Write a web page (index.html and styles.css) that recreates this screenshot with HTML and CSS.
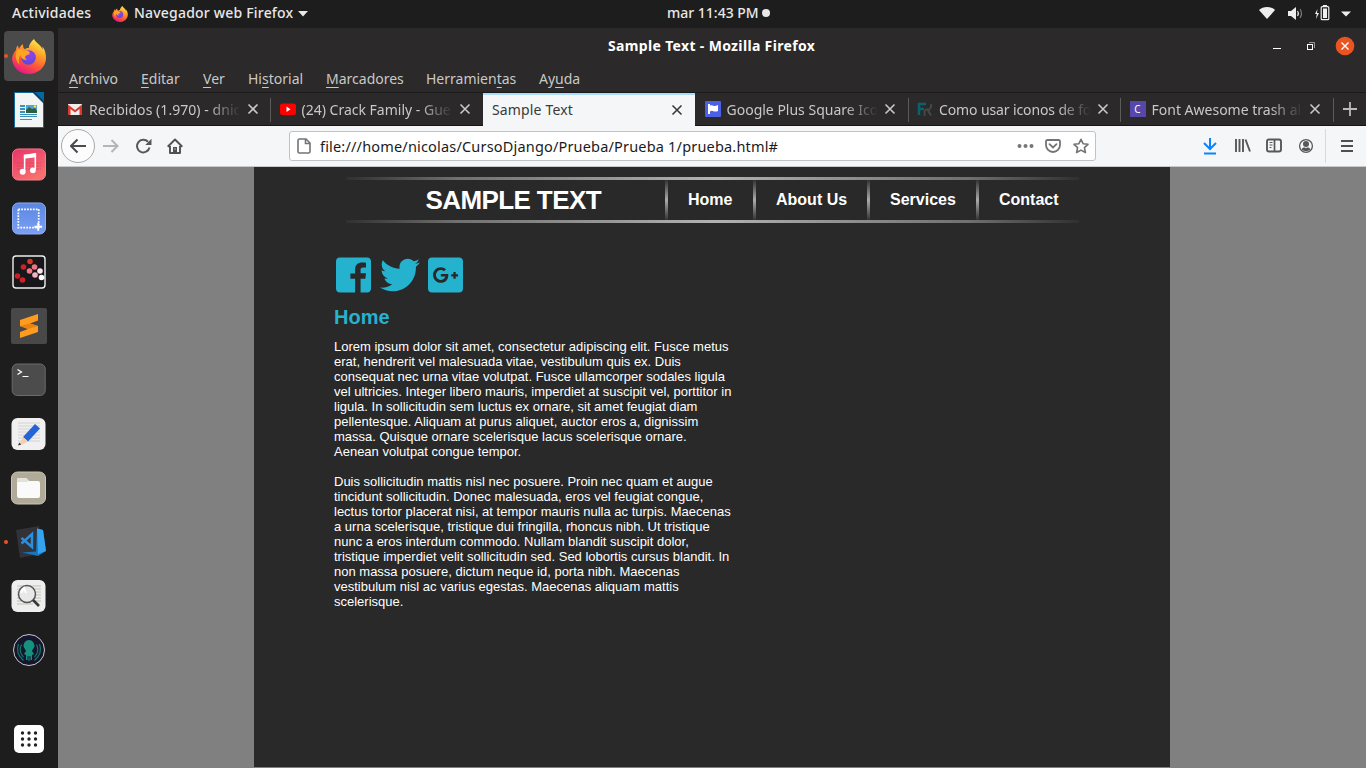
FILE: index.html
```html
<!DOCTYPE html>
<html lang="es">
<head>
<meta charset="utf-8">
<title>Sample Text</title>
<link rel="stylesheet" href="styles.css">
</head>
<body>
<svg width="0" height="0" class="defs">
  <defs>
    <linearGradient id="fx" x1="0.8" y1="0" x2="0.3" y2="1"><stop offset="0" stop-color="#fff44f"/><stop offset=".35" stop-color="#ffa32a"/><stop offset=".65" stop-color="#ff5a36"/><stop offset="1" stop-color="#e8138c"/></linearGradient>
    <radialGradient id="fxg" cx=".55" cy=".3" r=".8"><stop offset="0" stop-color="#a03cf0"/><stop offset="1" stop-color="#4a4fd0"/></radialGradient>
    <linearGradient id="music" x1="0" y1="0" x2=".6" y2="1"><stop offset="0" stop-color="#e8336a"/><stop offset="1" stop-color="#f8706e"/></linearGradient>
    <linearGradient id="shot" x1="0" y1="0" x2="0" y2="1"><stop offset="0" stop-color="#5b86e0"/><stop offset="1" stop-color="#7ba0f5"/></linearGradient>
    <symbol id="firefox" viewBox="0 0 34 35">
      <path fill="url(#fx)" d="M22 0c-3 3-5 5-5.200 9-2 0-3 .5-4 1.200-1.500-1-2-3-1.700-5-2 1-3.300 2.600-4 4.500L5.800 6.600C4.600 7.800 4 9.500 4 11 1.500 14 0 17 0 20.500 1 29 8 35 17 35s17-7 17-16c0-4-1-8.500-3.500-11.500l.2 3.200C29 5.500 24 4.500 22 0z"/>
      <circle cx="16.500" cy="18.500" r="7.300" fill="url(#fxg)"/>
      <path fill="#ffa51f" d="M5 11c3-1.500 6-.8 8 .7 2-.5 4 .3 5 2.300-1 2-4 2-4.800 3.500-.5 1.500.8 2.500 1.800 3-3 1-6-1-6.500-4.500C7 18 6 22 8 26 3 22 3 15 5 11z"/>
    </symbol>
    <symbol id="close" viewBox="0 0 12 12"><path d="M1.500 1.500l9 9m0-9l-9 9" fill="none" stroke="currentColor" stroke-width="1.600"/></symbol>
  </defs>
</svg>

<header class="topbar">
  <span class="activities">Actividades</span>
  <svg class="top-fx" width="16" height="16"><use href="#firefox"/></svg>
  <span class="appname">Navegador web Firefox</span>
  <svg class="top-caret" width="10" height="6"><path d="M0 0h10L5 5.500z" fill="#e8e8e8"/></svg>
  <span class="clock">mar 11:43 PM</span>
  <i class="clock-dot"></i>
  <div class="tray">
    <svg width="100" height="20" viewBox="0 0 100 20" fill="#eee">
      <path d="M0 6C4 2 12 2 16 6L8 15z"/>
      <path d="M29 7h3l5-4v13l-5-4h-3z"/><path d="M38.500 7q1.800 2.500 0 5" fill="none" stroke="#ddd" stroke-width="1.200"/><path d="M41 5q3 4.500 0 9" fill="none" stroke="#777" stroke-width="1.200"/>
      <path d="M58.500 5l-2.500 5h1.800l-.8 5 3-6h-2z"/><path d="M64 1h4v1.500h-4z"/><rect x="62.200" y="2.700" width="7.600" height="13" rx="1" fill="none" stroke="#eee" stroke-width="1.200"/><path d="M64 4.500h4V14h-4z"/>
      <path d="M82 7.500h10L87 12.500z"/>
    </svg>
  </div>
</header>

<div class="desktop">
  <nav class="dock">
    <div class="slot"><div class="tile"><svg width="34" height="35"><use href="#firefox"/></svg></div><i class="dot"></i></div>
    <div class="slot"><svg width="30" height="36" viewBox="0 0 30 36"><path d="M.5.5h19l10 10v25H.5z" fill="#f3f5f5" stroke="#106aa0"/><path d="M20 0h10v10z" fill="#0369a3"/><path d="M18 0l12 12v-3L21 0z" fill="#0c4266"/><g fill="#3a93bd"><path d="M6 13h5v2H6zM6 16h5v2H6zM6 19h5v2H6zM6 22h17v1H6zM6 24h17v1H6zM6 27h12v1H6z"/></g><path d="M12 13h11v8H12z" fill="#4aa6d8"/><path d="M12 21v-3l3-3 3 2 3-1 2 3v2z" fill="#345d3d"/><circle cx="21" cy="14.500" r="1.200" fill="#ffe14d"/></svg></div>
    <div class="slot"><svg width="34" height="33" viewBox="0 0 35 33"><rect x=".5" y=".5" width="34" height="32" rx="6" fill="url(#music)" stroke="#fa7f8d"/><path d="M5 15h25M5 18h25M5 21h25" stroke="#d43862" stroke-width=".7" stroke-dasharray="3 1"/><path d="M13 23.500V7.500l11-2v16" fill="none" stroke="#fff" stroke-width="1.600"/><path d="M12.200 6.500l12.600-1.500v4l-12.600 1.500z" fill="#fff"/><circle cx="11" cy="24" r="3" fill="#fff"/><circle cx="21.500" cy="22.500" r="3" fill="#fff"/></svg></div>
    <div class="slot"><svg width="34" height="33" viewBox="0 0 35 33"><rect x=".5" y=".5" width="34" height="32" rx="6" fill="url(#shot)" stroke="#8fb0f7"/><rect x="6.500" y="7" width="21" height="19" fill="none" stroke="#fff" stroke-width="1.800" stroke-dasharray="1.800 1.200"/><path d="M27 21v8M23 25h8" stroke="#fff" stroke-width="2"/></svg></div>
    <div class="slot"><svg width="34" height="34" viewBox="0 0 34 34"><rect x="1" y="1" width="32" height="32" rx="3" fill="#17161b" stroke="#eee" stroke-width="1.400"/><circle cx="18" cy="6.500" r="2.800" fill="#d43a24"/><circle cx="11.500" cy="12" r="2.800" fill="#cc2229"/><circle cx="5.500" cy="21" r="2.800" fill="#cc1c24"/><circle cx="10.500" cy="25" r="2.800" fill="#d0202c"/><circle cx="22.500" cy="12" r="2.800" fill="#ee7580"/><circle cx="17.500" cy="16" r="2.800" fill="#f07a85"/><circle cx="23" cy="20" r="2.800" fill="#f7b2c1"/><circle cx="28" cy="16" r="2.800" fill="#fbe3ec"/><circle cx="29.500" cy="22.500" r="2.800" fill="#fff"/></svg></div>
    <div class="slot"><svg width="36" height="36" viewBox="0 0 36 36"><rect width="36" height="36" rx="2" fill="#484848"/><path d="M9 12l18-6v6.500l-8 3L27 18v6L9 30v-6l8-3-8-3z" fill="#ff9b1e"/><path d="M9 18l10-2.500L27 18l-10 3z" fill="#e88310"/></svg></div>
    <div class="slot"><svg width="36" height="34" viewBox="0 0 36 34"><rect x="1.200" y="1" width="33" height="31.500" rx="5" fill="#4c4c4c" stroke="#6c6c6c"/><path d="M6.500 6.500l4 2.500-4 2.500M11.500 13.500h6" fill="none" stroke="#fff" stroke-width="1.200"/></svg></div>
    <div class="slot"><svg width="36" height="34" viewBox="0 0 36 34"><rect x=".5" y="1" width="34" height="32" rx="6" fill="#f0f0f0"/><path d="M7 6h22M7 9h22M7 12h22M7 15h22M7 18h22M7 21h22M7 24h22" stroke="#ccc" stroke-width=".8"/><path d="M12 20L24 7l5 4.500-12 13z" fill="#2563d8"/><path d="M12 20l5 4.500-6 3-3 1z" fill="#f4cfae"/><path d="M7 28.500l1.200-3 2 2z" fill="#333"/></svg></div>
    <div class="slot"><svg width="36" height="34" viewBox="0 0 36 34"><rect x=".5" y="1" width="34" height="32" rx="6" fill="#b0ab98" stroke="#cbc6b4"/><path d="M6 9q0-2 2-2h7l3 3h9q2 0 2 2v13q0 2-2 2H8q-2 0-2-2z" fill="#fafafa"/><path d="M6 11h10l2-1-3-3H8q-2 0-2 2z" fill="#e3e1d9"/></svg></div>
    <div class="slot"><svg class="code" width="32" height="34" viewBox="0 0 32 34"><path d="M1 5L24 1l4 27L5 33z" fill="#323238"/><path d="M22 3.500l6 1.500 3 21-8 5-16-3.500 14-1z" fill="#1677bd"/><path d="M22 3.500l6 1.500 3 21-8 3z" fill="#35a4f0"/><path d="M6.500 18.500L17 9v13L6.500 13" fill="none" stroke="#2a8edb" stroke-width="2.500"/></svg><i class="dot"></i></div>
    <div class="slot"><svg width="36" height="34" viewBox="0 0 36 34"><rect x=".5" y="1" width="34" height="32" rx="6" fill="#eee"/><path d="M6 7h24M6 10h24M6 13h24M6 16h24M6 19h24M6 22h24M6 25h16" stroke="#c4c0b4"/><circle cx="16" cy="15" r="8.500" fill="#e8e8e8" stroke="#555" stroke-width="1.500"/><path d="M10 14q2-4 3-5l2 5" stroke="#fff" stroke-width="2" fill="none"/><path d="M22 21l6 6" stroke="#383838" stroke-width="2.600"/></svg></div>
    <div class="slot"><svg width="34" height="34" viewBox="0 0 34 34"><circle cx="17" cy="17" r="15.500" fill="#15152b" stroke="#c7c7cf"/><path d="M17 7c-3.500 0-5.500 3.500-5.500 6 0 2 2 3 2.500 5l-2 3 2 1v5h1.500v-4h1v5h1v-5h1v4H20v-5l2-1-2-3c.5-2 2.500-3 2.500-5 0-2.500-2-6-5.500-6z" fill="#16917f"/><path d="M6.500 11q-3.500 9 5 16.500M9.500 11.500q-3.500 7 2 12.500M27.500 11q3.500 9-5 16.500M24.500 11.500q3.500 7-2 12.500" fill="none" stroke="#13796f" stroke-width="1.200"/></svg></div>
    <div class="apps"><svg width="30" height="28" viewBox="0 0 30 28"><rect width="30" height="28" rx="5" fill="#fff"/><g fill="#222"><circle cx="8.500" cy="8" r="1.700"/><circle cx="15" cy="8" r="1.700"/><circle cx="21.500" cy="8" r="1.700"/><circle cx="8.500" cy="14" r="1.700"/><circle cx="15" cy="14" r="1.700"/><circle cx="21.500" cy="14" r="1.700"/><circle cx="8.500" cy="20" r="1.700"/><circle cx="15" cy="20" r="1.700"/><circle cx="21.500" cy="20" r="1.700"/></g></svg></div>
  </nav>

  <main class="window">
    <div class="titlebar">
      <span class="wtitle">Sample Text - Mozilla Firefox</span>
      <div class="wbtns">
        <svg width="90" height="20" viewBox="0 0 90 20"><path d="M7 12.500h8" stroke="#fff"/><path d="M43 6.500h5.500V12" fill="none" stroke="#999"/><rect x="41.500" y="8.500" width="5" height="5" fill="none" stroke="#fff"/><circle cx="79" cy="10" r="9.300" fill="#e95420"/><path d="M75.500 6.500l7 7m0-7l-7 7" stroke="#fff" stroke-width="1.400"/></svg>
      </div>
    </div>
    <div class="menubar">
      <span><u>A</u>rchivo</span><span><u>E</u>ditar</span><span><u>V</u>er</span><span>Hi<u>s</u>torial</span><span><u>M</u>arcadores</span><span>Herramien<u>t</u>as</span><span>Ay<u>u</u>da</span>
    </div>
    <div class="tabs">
      <div class="tab first"><svg class="fav" width="16" height="16" viewBox="0 0 16 16"><path d="M1 3h14v11H1z" fill="#eee"/><path d="M1 14V3.500L8 9l7-5.500V14h-2.500V8L8 11.500 3.500 8v6z" fill="#d93a2f"/></svg><span class="label t1">Recibidos (1.970) - dnic</span><svg class="x" width="12" height="12"><use href="#close"/></svg></div>
      <div class="tab"><svg class="fav" width="16" height="16" viewBox="0 0 16 16"><rect x="0" y="2.500" width="16" height="11.500" rx="2.500" fill="#f00"/><path d="M6.500 5.500v5.500l4-2.700z" fill="#fff"/></svg><span class="label t2">(24) Crack Family - Gue</span><svg class="x" width="12" height="12"><use href="#close"/></svg></div>
      <div class="tab active"><span class="label t3">Sample Text</span><svg class="x" width="12" height="12"><use href="#close"/></svg></div>
      <div class="tab"><svg class="fav" width="16" height="16" viewBox="0 0 16 16"><rect width="16" height="16" rx="1" fill="#4c60e6"/><path d="M3 3h2v1.500q2-.5 3.500.3T13 4v6q-2.500 1-4.500.2T5 10.500V13H3z" fill="#fff"/></svg><span class="label t4">Google Plus Square Ico</span><svg class="x" width="12" height="12"><use href="#close"/></svg></div>
      <div class="tab"><svg class="fav" width="16" height="16" viewBox="0 0 16 16"><path d="M2 14V3h7M2 8h5" fill="none" stroke="#07636d" stroke-width="2.500"/><path d="M7.500 15v-4q0-3 3.500-2.500M14 3q1 4-3 6.500l3 5" fill="none" stroke="#454d48" stroke-width="1.800"/></svg><span class="label t5">Como usar iconos de fo</span><svg class="x" width="12" height="12"><use href="#close"/></svg></div>
      <div class="tab"><i class="fav cfav">C</i><span class="label t6">Font Awesome trash al</span><svg class="x" width="12" height="12"><use href="#close"/></svg></div>
      <div class="newtab"><svg width="14" height="14"><path d="M7 0v14M0 7h14" stroke="#bbb" stroke-width="1.800"/></svg></div>
    </div>
    <div class="toolbar">
      <div class="back"><svg width="16" height="16" viewBox="0 0 16 16"><path d="M16 8H1.500M7.500 1.500L1 8l6.500 6.500" fill="none" stroke="#4b4b4f" stroke-width="2"/></svg></div>
      <svg class="fwd" width="16" height="16" viewBox="0 0 16 16"><path d="M0 8h14.500M8.500 2l6 6-6 6" fill="none" stroke="#b5b5b7" stroke-width="2"/></svg>
      <svg class="reload" width="16" height="16" viewBox="0 0 16 16"><path d="M13.500 9.500A6.300 6.300 0 1 1 12 3.800" fill="none" stroke="#58585b" stroke-width="2"/><path d="M15.500.800V7H9.300z" fill="#58585b"/></svg>
      <svg class="home" width="16" height="16" viewBox="0 0 16 16"><path d="M.7 8.700L8 1.500l7.300 7.200M3 8v7h10V8" fill="none" stroke="#505053" stroke-width="1.900" stroke-linejoin="round"/><path d="M6 9h4v6H6z" fill="#505053"/><path d="M7.500 10h1v2h-1z" fill="#aaa"/></svg>
      <div class="urlbar">
        <svg width="14" height="16" viewBox="0 0 14 16"><path d="M3 1h6l4 4v8.500a1.500 1.500 0 0 1-1.500 1.500h-9A1.500 1.500 0 0 1 1 13.500v-11A1.500 1.500 0 0 1 2.500 1zM8.500 1v4.500H13" fill="none" stroke="#737376" stroke-width="1.600"/></svg>
        <span class="url">file:///home/nicolas/CursoDjango/Prueba/Prueba 1/prueba.html#</span>
        <svg class="urlicons" width="74" height="16" viewBox="0 0 74 16"><g fill="#777"><circle cx="2.500" cy="8" r="2"/><circle cx="8.500" cy="8" r="2"/><circle cx="14.500" cy="8" r="2"/></g><path d="M30.500 2h11q1.500 0 1.500 1.500V7a7 7 0 0 1-14 0V3.500Q29 2 30.500 2z" fill="none" stroke="#737376" stroke-width="1.800"/><path d="M32.500 6.200L36 9.500l3.500-3.300" fill="none" stroke="#737376" stroke-width="1.800" stroke-linecap="round"/><path d="M64 1.300l2.100 4.400 4.900.6-3.600 3.300 1 4.900L64 12.100l-4.400 2.400 1-4.900L57 6.300l4.900-.6z" fill="none" stroke="#737376" stroke-width="1.600" stroke-linejoin="round"/></svg>
      </div>
      <svg class="tools" width="156" height="34" viewBox="0 0 156 34">
        <path d="M8 9v10M2 14l6 6 6-6M2 24.500h12" fill="none" stroke="#0a84ff" stroke-width="2"/>
        <path d="M34 10v13M37.500 10v13M41 10v13M43.500 10.500l4.500 12" fill="none" stroke="#58585b" stroke-width="1.900"/>
        <rect x="65" y="10.500" width="14" height="12" rx="2" fill="none" stroke="#58585b" stroke-width="1.900"/><path d="M72.500 11v11" stroke="#58585b" stroke-width="1.700"/><path d="M67.500 13.500h3M67.500 16h3M67.500 18.500h2" stroke="#58585b"/>
        <circle cx="104" cy="17" r="6.400" fill="none" stroke="#58585b" stroke-width="1.300"/><circle cx="104" cy="15" r="3" fill="#58585b"/><path d="M99.500 20.500q1-2 2.500-2.200 2 1.200 4 0 1.500.2 2.500 2.200-4.500 3.500-9 0z" fill="#58585b"/>
        <path d="M123.500 0v34" stroke="#d8d9db"/>
        <path d="M139 12h12M139 17h12M139 22h12" stroke="#4f4f52" stroke-width="2"/>
      </svg>
    </div>
    <div class="viewport">
      <div class="page">
        <div class="head">
          <div class="brand">SAMPLE TEXT</div>
          <a>Home</a><a>About Us</a><a>Services</a><a>Contact</a>
        </div>
        <div class="content">
          <div class="social">
            <svg width="35" height="40" viewBox="0 0 448 512"><path d="M448 80v352c0 26.500-21.500 48-48 48h-85.300V302.800h60.600l8.700-67.600h-69.300V192c0-19.600 5.400-32.900 33.500-32.900H384V98.700c-6.200-.8-27.400-2.700-52.200-2.700-51.600 0-87 31.500-87 89.400v49.900H184v67.600h60.900V480H48c-26.500 0-48-21.500-48-48V80c0-26.500 21.500-48 48-48h352c26.500 0 48 21.500 48 48z"/></svg>
            <svg width="40" height="40" viewBox="0 0 512 512"><path d="M459.370 151.716c.325 4.548.325 9.097.325 13.645 0 138.720-105.583 298.558-298.558 298.558-59.452 0-114.680-17.219-161.137-47.106 8.447.974 16.568 1.299 25.340 1.299 49.055 0 94.213-16.568 130.274-44.832-46.132-.975-84.792-31.188-98.112-72.772 6.498.974 12.995 1.624 19.818 1.624 9.421 0 18.843-1.300 27.614-3.573-48.081-9.747-84.143-51.980-84.143-102.985v-1.299c13.969 7.797 30.214 12.670 47.431 13.319-28.264-18.843-46.781-51.005-46.781-87.391 0-19.492 5.197-37.360 14.294-52.954 51.655 63.675 129.300 105.258 216.365 109.807-1.624-7.797-2.599-15.918-2.599-24.040 0-57.828 46.782-104.934 104.934-104.934 30.213 0 57.502 12.670 76.670 33.137 23.715-4.548 46.456-13.320 66.599-25.340-7.798 24.366-24.366 44.833-46.132 57.827 21.117-2.273 41.584-8.122 60.426-16.243-14.292 20.791-32.161 39.308-52.628 54.253z"/></svg>
            <svg width="35" height="40" viewBox="0 0 448 512"><path d="M400 32H48C21.500 32 0 53.500 0 80v352c0 26.500 21.500 48 48 48h352c26.500 0 48-21.500 48-48V80c0-26.500-21.500-48-48-48zM164 356c-55.300 0-100-44.700-100-100s44.700-100 100-100c27 0 49.500 9.800 67 26.200l-27.100 26.100c-7.400-7.100-20.300-15.400-39.800-15.400-34.100 0-61.900 28.200-61.900 63.200 0 34.900 27.800 63.200 61.900 63.200 39.600 0 54.400-28.500 56.800-43.100H164v-34.400h94.400c1 5 1.600 10.100 1.600 16.600 0 57.100-38.300 97.600-96 97.600zm220-81.800h-29v29h-29.200v-29h-29V245h29v-29H355v29h29v29.200z"/></svg>
          </div>
          <h1>Home</h1>
          <p>Lorem ipsum dolor sit amet, consectetur adipiscing elit. Fusce metus erat, hendrerit vel malesuada vitae, vestibulum quis ex. Duis consequat nec urna vitae volutpat. Fusce ullamcorper sodales ligula vel ultricies. Integer libero mauris, imperdiet at suscipit vel, porttitor in ligula. In sollicitudin sem luctus ex ornare, sit amet feugiat diam pellentesque. Aliquam at purus aliquet, auctor eros a, dignissim massa. Quisque ornare scelerisque lacus scelerisque ornare. Aenean volutpat congue tempor.</p>
          <p>Duis sollicitudin mattis nisl nec posuere. Proin nec quam et augue tincidunt sollicitudin. Donec malesuada, eros vel feugiat congue, lectus tortor placerat nisi, at tempor mauris nulla ac turpis. Maecenas a urna scelerisque, tristique dui fringilla, rhoncus nibh. Ut tristique nunc a eros interdum commodo. Nullam blandit suscipit dolor, tristique imperdiet velit sollicitudin sed. Sed lobortis cursus blandit. In non massa posuere, dictum neque id, porta nibh. Maecenas vestibulum nisl ac varius egestas. Maecenas aliquam mattis scelerisque.</p>
        </div>
      </div>
    </div>
  </main>
</div>
</body>
</html>
```
FILE: styles.css
```css
* { box-sizing: border-box; }
body { margin: 0; width: 1366px; height: 768px; overflow: hidden; background: #1d1d1d; font-family: "Noto Sans", "Open Sans", sans-serif; font-size: 14px; }
svg { display: block; flex: none; }
.defs { position: absolute; }
span { white-space: nowrap; }

.topbar { height: 28px; display: flex; align-items: center; background: #1d1d1d; color: #e8e8e8; font-weight: 500; padding-left: 12px; }
.topbar span { line-height: 26px; padding-bottom: 2px; }
.activities { width: 100px; letter-spacing: .25px; }
.top-fx { margin-right: 6px; }
.appname { width: 164px; letter-spacing: .2px; }
.clock { margin-left: 359px; width: 95px; }
.clock-dot { width: 8px; height: 8px; margin-top: -2px; border-radius: 50%; background: #e8e8e8; }
.top-caret { margin-top: -1px; }
.tray { margin-left: auto; width: 107px; padding-top: 4px; height: 28px; }

.desktop { display: flex; height: 740px; }
.dock { width: 58px; padding-top: 1px; display: flex; flex-direction: column; background: #1d1d1d; }
.slot { height: 54px; display: flex; align-items: center; justify-content: center; position: relative; }
.tile { width: 50px; height: 50px; border-radius: 4px; background: #4a4a4a; display: flex; align-items: center; justify-content: center; }
.dot { position: absolute; left: 4px; top: 25px; width: 4px; height: 4px; border-radius: 50%; background: #e95420; }
.code { margin-left: 4px; }
.apps { margin: 48px auto 0; }

.window { flex: 1; display: flex; flex-direction: column; background: #2b292a; }
.titlebar { height: 36px; display: flex; align-items: center; color: #fff; font-weight: 700; }
.wtitle { margin-left: 550px; padding-bottom: 2px; letter-spacing: .34px; }
.wbtns { margin-left: auto; width: 100px; }
.menubar { height: 28px; display: grid; grid-template-columns: 72px 62px 45px 78px 100px 113px 60px; align-items: center; padding: 1px 0 0 11px; color: #c9c8c6; }
.menubar u { text-underline-offset: 3px; text-decoration-thickness: 1px; }
.tabs { height: 34px; display: flex; border-top: 1px solid #1c1b1c; border-bottom: 1px solid #161516; color: #c9c8c6; }
.tab { width: 212.5px; padding: 0 12px 0 9px; display: flex; align-items: center; position: relative; }
.tab + .tab:not(.active)::before, .newtab::before { content: ""; position: absolute; left: -.5px; top: 5px; width: 1px; height: 24px; background: #5c5b5c; }
.active + .tab::before { display: none; }
.tab .fav { margin-right: 6px; width: 16px; flex: none; }
.cfav { height: 16px; background: #5648a8; color: #fff; font: 10px/16px "Noto Sans", sans-serif; text-align: center; }
.label { flex: 1; margin-right: 6px; padding-top: 2px; line-height: 22px; -webkit-mask-image: linear-gradient(90deg, #000 78%, transparent); mask-image: linear-gradient(90deg, #000 78%, transparent); }
.t1 { letter-spacing: .05px; }
.t5 { letter-spacing: -.12px; }
.active { width: 212px; margin-right: .5px; background: #f5f6f7; color: #3a3a3c; border-top: 2px solid #a9dcf8; margin-bottom: -1px; }
.active .label { padding: 0 0 2px; letter-spacing: .15px; -webkit-mask-image: none; mask-image: none; }
.active .x { margin-top: -2px; }
.newtab { position: relative; padding: 9px 0 0 10px; }

.toolbar { height: 41px; background: #f5f6f7; border-bottom: 1px solid #c6cacd; display: flex; align-items: center; }
.back { width: 34px; height: 34px; margin-left: 3px; border: 1px solid #a9a9aa; border-radius: 50%; background: #fcfcfc; display: flex; align-items: center; justify-content: center; }
.fwd { margin-left: 8px; }
.reload { margin-left: 17px; }
.home { margin-left: 15px; }
.urlbar { width: 807px; height: 30px; margin-left: 106px; padding: 0 4px 0 7px; border: 1px solid #bfc2c8; border-radius: 3px; background: #fff; display: flex; align-items: center; color: #1b1b1d; }
.url { margin-left: 9px; font-size: 14.5px; letter-spacing: .18px; }
.urlicons { margin-left: auto; }
.tools { margin-left: 106px; }

.viewport { height: 601px; background: #808080; padding-left: 196px; font-family: "Liberation Sans", Arial, sans-serif; }
.page { width: 916px; height: 600px; background: #292929; padding-top: 10px; color: #fff; }
.head { --fade: linear-gradient(90deg, #303030, #707070 15%, #b2b2b2 50%, #707070 85%, #303030); width: 733px; height: 46px; margin: 0 auto; display: grid; grid-template-columns: 319px 88px 114px 109px 103px; padding: 3px 0 4px; background: var(--fade) top / 100% 3px no-repeat, var(--fade) bottom / 100% 3px no-repeat; }
.brand { padding-left: 80px; font-size: 26px; font-weight: 700; line-height: 40px; white-space: nowrap; letter-spacing: -.6px; }
.head a { font-size: 16px; font-weight: 700; line-height: 39px; padding-left: 23.5px; white-space: nowrap; background: linear-gradient(#333, #aaa 50%, #333) left / 3px 100% no-repeat; }
.content { width: 400px; margin-left: 80px; }
.social { display: flex; padding: 32px 0 0 2px; fill: #24b2ce; gap: 8.500px; }
h1 { margin: 11px 0 0; font-size: 20px; line-height: 23px; color: #24b2ce; }
p { margin: 0 0 15px; font-size: 13px; line-height: 15px; }
h1 + p { margin-top: 10px; }
```
